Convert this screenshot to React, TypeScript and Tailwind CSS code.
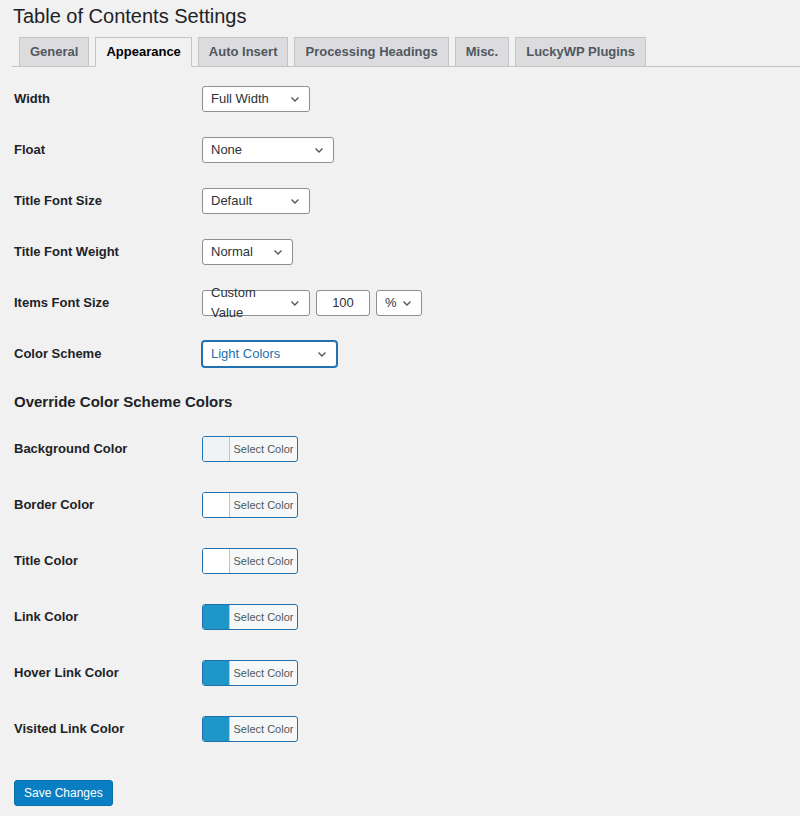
import React from 'react';

const font = { fontFamily: '"Liberation Sans", Arial, sans-serif' };

const Chevron = () => (
  <svg width="12" height="12" viewBox="0 0 12 12" className="text-[#50575e]">
    <path d="M2.5 4.5 L6 8 L9.5 4.5" fill="none" stroke="currentColor" strokeWidth="1.4" />
  </svg>
);

const Select: React.FC<{ value: string; w: string; focus?: boolean }> = ({ value, w, focus }) => (
  <div
    className={`${w} h-[26px] flex items-center justify-between pl-2 pr-2 rounded-[3px] bg-white text-[13px] ${
      focus ? 'border border-[#2271b1] shadow-[0_0_0_1px_#2271b1] text-[#2271b1]' : 'border border-[#8c8f94] text-[#2c3338]'
    }`}
  >
    <span>{value}</span>
    <Chevron />
  </div>
);

const ColorBtn: React.FC<{ color: string }> = ({ color }) => (
  <div className="w-[96px] h-[26px] flex rounded-[3px] border border-[#2271b1] overflow-hidden bg-[#f6f7f7]">
    <div className="w-[27px] h-full border-r border-[#c3c4c7]" style={{ background: color }} />
    <div className="flex-1 flex items-center justify-center text-[11px] text-[#50575e]">Select Color</div>
  </div>
);

const Row: React.FC<{ label: string; h: string; children: React.ReactNode }> = ({ label, h, children }) => (
  <div className={`flex items-center ${h}`}>
    <div className="w-[188px] text-[13px] font-semibold text-[#1d2327]">{label}</div>
    {children}
  </div>
);

const tabs = ['General', 'Appearance', 'Auto Insert', 'Processing Headings', 'Misc.', 'LuckyWP Plugins'];

export default function App() {
  return (
    <div className="w-[800px] h-[816px] bg-[#f1f1f1] overflow-hidden" style={font}>
      <h1 className="px-[13px] pt-[3px] h-[37px] text-[20px] text-[#1d2327] leading-[26px]">Table of Contents Settings</h1>
      <div className="ml-[12px] flex items-end gap-[6px] pl-[7px] border-b border-[#c3c4c7] h-[30px]">
        {tabs.map((t) =>
          t === 'Appearance' ? (
            <div key={t} className="h-[30px] -mb-px px-[10px] flex items-center bg-[#f1f1f1] border border-[#c3c4c7] border-b-[#f1f1f1] text-[13px] font-semibold text-[#000]">
              {t}
            </div>
          ) : (
            <div key={t} className="h-[29px] px-[10px] flex items-center bg-[#dcdcde] border border-b-0 border-[#c3c4c7] text-[13px] font-semibold text-[#50575e]">
              {t}
            </div>
          )
        )}
      </div>
      <div className="px-[14px] pt-[6px]">
        <Row label="Width" h="h-[51px]"><Select value="Full Width" w="w-[108px]" /></Row>
        <Row label="Float" h="h-[51px]"><Select value="None" w="w-[132px]" /></Row>
        <Row label="Title Font Size" h="h-[51px]"><Select value="Default" w="w-[108px]" /></Row>
        <Row label="Title Font Weight" h="h-[51px]"><Select value="Normal" w="w-[91px]" /></Row>
        <Row label="Items Font Size" h="h-[51px]">
          <div className="flex gap-[6px]">
            <Select value="Custom Value" w="w-[108px]" />
            <div className="w-[54px] h-[26px] flex items-center justify-center rounded-[3px] bg-white border border-[#8c8f94] text-[13px] text-[#2c3338]">100</div>
            <Select value="%" w="w-[46px]" />
          </div>
        </Row>
        <Row label="Color Scheme" h="h-[51px]"><Select value="Light Colors" w="w-[135px]" focus /></Row>
        <h2 className="mt-[13px] h-[29px] text-[15px] font-semibold text-[#1d2327] leading-[20px]">Override Color Scheme Colors</h2>
        <Row label="Background Color" h="h-[56px]"><ColorBtn color="#f0f3f6" /></Row>
        <Row label="Border Color" h="h-[56px]"><ColorBtn color="#ffffff" /></Row>
        <Row label="Title Color" h="h-[56px]"><ColorBtn color="#ffffff" /></Row>
        <Row label="Link Color" h="h-[56px]"><ColorBtn color="#1e96c8" /></Row>
        <Row label="Hover Link Color" h="h-[56px]"><ColorBtn color="#1e96c8" /></Row>
        <Row label="Visited Link Color" h="h-[56px]"><ColorBtn color="#1e96c8" /></Row>
        <div className="mt-[23px]">
          <button className="h-[26px] px-[9px] rounded-[3px] bg-[#0a7ec2] border border-[#0a6fab] text-white text-[12px]">Save Changes</button>
        </div>
      </div>
    </div>
  );
}
